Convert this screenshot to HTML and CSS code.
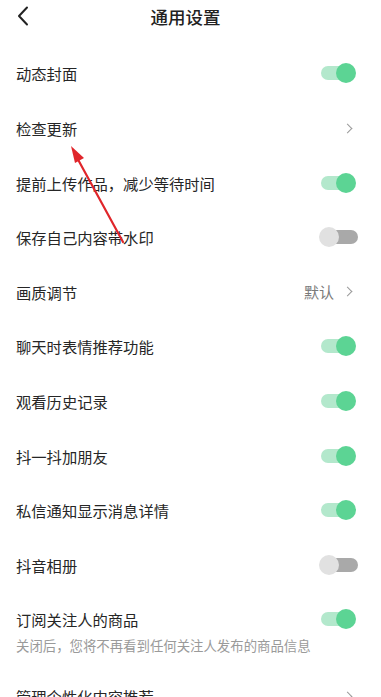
FILE: index.html
```html
<!DOCTYPE html>
<html lang="zh">
<head>
<meta charset="utf-8">
<link rel="stylesheet" href="styles.css">
</head>
<body>
<div class="page">
  <header class="topbar">
    <svg class="back" width="12" height="20" viewBox="0 0 12 20"><path d="M10 1.5 L2 10 L10 18.5" fill="none" stroke="#222" stroke-width="2" stroke-linecap="round" stroke-linejoin="round"/></svg>
    <div class="title">通用设置</div>
  </header>
  <div class="list">
    <div class="row"><span class="label">动态封面</span><span class="switch on"></span></div>
    <div class="row"><span class="label">检查更新</span><span class="chev"></span></div>
    <div class="row"><span class="label">提前上传作品，减少等待时间</span><span class="switch on"></span></div>
    <div class="row"><span class="label">保存自己内容带水印</span><span class="switch off"></span></div>
    <div class="row"><span class="label">画质调节</span><span class="right"><span class="value">默认</span><span class="chev"></span></span></div>
    <div class="row"><span class="label">聊天时表情推荐功能</span><span class="switch on"></span></div>
    <div class="row"><span class="label">观看历史记录</span><span class="switch on"></span></div>
    <div class="row"><span class="label">抖一抖加朋友</span><span class="switch on"></span></div>
    <div class="row"><span class="label">私信通知显示消息详情</span><span class="switch on"></span></div>
    <div class="row"><span class="label">抖音相册</span><span class="switch off"></span></div>
    <div class="row tall">
      <div class="texts">
        <div class="label">订阅关注人的商品</div>
        <div class="sub">关闭后，您将不再看到任何关注人发布的商品信息</div>
      </div>
      <span class="switch on"></span>
    </div>
    <div class="row"><span class="label">管理个性化内容推荐</span><span class="chev"></span></div>
  </div>
  <svg class="annot" width="381" height="697" viewBox="0 0 381 697">
    <line x1="123" y1="242" x2="75" y2="154" stroke="#e0262b" stroke-width="2.2" stroke-linecap="round"/>
    <polygon points="71,146 84,158 75,163" fill="#e0262b"/>
  </svg>
</div>
</body>
</html>
```
FILE: styles.css
```css
* { box-sizing: border-box; }
html, body { margin: 0; padding: 0; background: #fff; }
body {
  font-family: "Noto Sans CJK SC", "Noto Sans", sans-serif;
  color: #2b2b2b;
  width: 381px;
  height: 697px;
  overflow: hidden;
}
.page { position: relative; width: 381px; height: 697px; overflow: hidden; }
.topbar {
  height: 33px;
  display: flex;
  align-items: center;
  justify-content: center;
  padding-right: 10px;
  position: relative;
}
.back { position: absolute; left: 17px; top: 6px; }
.title { font-size: 17.5px; font-weight: 500; color: #222; }
.list { padding-top: 13.2px; }
.row {
  height: 54.6px;
  display: flex;
  align-items: center;
  justify-content: space-between;
  padding: 0 25px 0 16px;
}
.label { font-size: 15.3px; line-height: 22px; color: #262626; }
.sub { font-size: 13.4px; line-height: 22px; color: #9a9a9a; margin-top: 4px; }
.row.tall {
  height: auto;
  align-items: flex-start;
  padding-top: 16.3px;
  padding-bottom: 12.7px;
}
.switch {
  position: relative;
  width: 37px;
  height: 21px;
  flex: none;
}
.switch::before {
  content: "";
  position: absolute;
  left: 2px; right: 2px; top: 3.5px; height: 14px;
  border-radius: 7px;
}
.switch::after {
  content: "";
  position: absolute;
  top: 0.5px;
  width: 20px; height: 20px;
  border-radius: 50%;
}
.switch.on::before { background: #b3e8cc; }
.switch.on::after { right: 0; background: #5cd494; }
.switch.off::before { background: #a9a9a9; left: 5px; right: -2px; }
.switch.off::after { left: 0; background: #e1e1e1; }
.right { display: flex; align-items: center; gap: 10px; }
.value { font-size: 15px; color: #7a7a7a; }
.chev {
  width: 7px; height: 7px;
  border-right: 1.6px solid #9a9a9a;
  border-top: 1.6px solid #9a9a9a;
  transform: rotate(45deg);
  margin-right: 5px;
  flex: none;
}
.annot { position: absolute; left: 0; top: 0; pointer-events: none; }
```
